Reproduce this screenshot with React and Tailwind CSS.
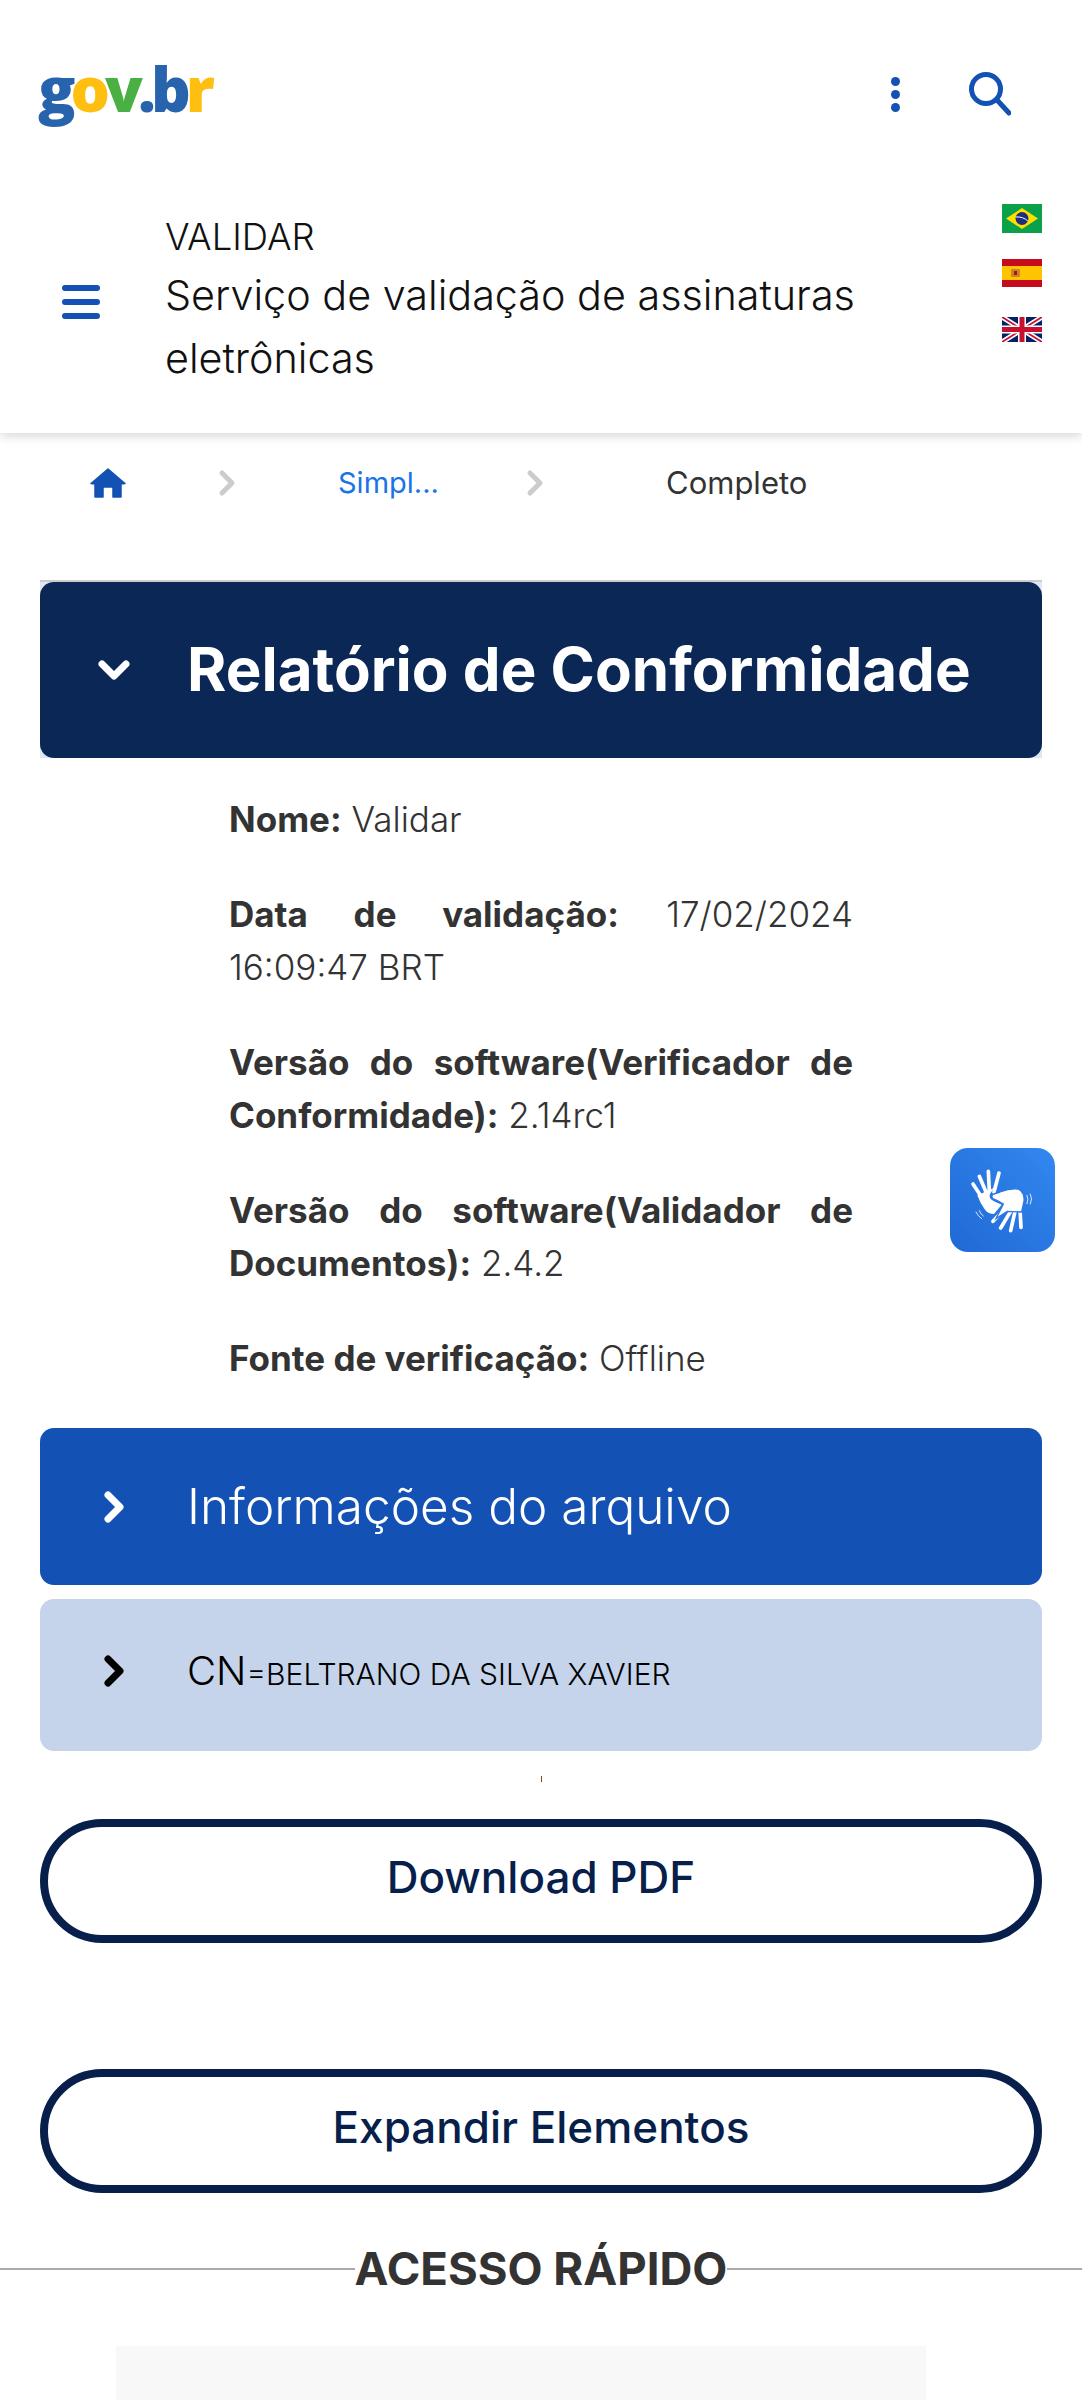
import React from 'react';
import { ChevronRight, ChevronDown } from 'lucide-react';

const FONT = "font-['Inter','Open_Sans',sans-serif]";

const FlagBr = () => (
  <svg viewBox="0 0 40 29" className="w-10 h-[29px] block">
    <rect width="40" height="29" fill="#0aa14a" />
    <path d="M20 4 36 14.500 20 25 4 14.500z" fill="#fedf00" />
    <circle cx="20" cy="14.500" r="6.500" fill="#1c2f7e" />
    <path d="M13.800 13c4.500-.5 9 1 12 4" stroke="#fff" strokeWidth="1" fill="none" />
  </svg>
);

const FlagEs = () => (
  <svg viewBox="0 0 40 28" className="w-10 h-7 block">
    <rect width="40" height="28" fill="#c60b1e" />
    <rect y="7" width="40" height="14" fill="#ffc400" />
    <rect x="9" y="10" width="9" height="8" rx="1" fill="#c8862a" />
    <rect x="12" y="12" width="3" height="4" fill="#ad1519" />
  </svg>
);

const FlagUk = () => (
  <svg viewBox="0 0 40 25" className="w-10 h-[25px] block">
    <rect width="40" height="25" fill="#012169" />
    <path d="M0 0 40 25M40 0 0 25" stroke="#fff" strokeWidth="5" />
    <path d="M0 0 40 25M40 0 0 25" stroke="#c8102e" strokeWidth="1.800" />
    <path d="M20 0v25M0 12.500h40" stroke="#fff" strokeWidth="8" />
    <path d="M20 0v25M0 12.500h40" stroke="#c8102e" strokeWidth="5" />
  </svg>
);

const HouseIcon = () => (
  <svg viewBox="0 0 36 30" className="w-9 h-[30px]" fill="#1351b4" stroke="#1351b4" strokeWidth="1.500" strokeLinejoin="round">
    <path d="M18 1 35 15.500 31 16V29H23V19H13V29H5V16L1 15.500z" />
  </svg>
);

const SearchIcon = () => (
  <svg viewBox="0 0 42 44" className="w-[42px] h-11" fill="none" stroke="#1351b4" strokeWidth="5" strokeLinecap="round">
    <circle cx="17" cy="17" r="14.500" />
    <path d="M28 28 40 41" />
  </svg>
);

const HandsIcon = () => (
  <svg viewBox="150 140 195 195" className="w-[65px] h-[65px]" fill="#fff">
    <g stroke="#fff" strokeWidth="11" strokeLinecap="round">
      <path d="M159 188 185 228M178 165 198 212M205 150 208 208M237 155 222 212" />
      <path d="M219 300 262 255M242 320 275 265M272 328 285 270M303 318 300 265" />
    </g>
    <path d="M172 222 222 200 210 218Q205 232 222 240L245 250 222 278Q205 278 195 265 180 245 172 222Z" />
    <path d="M240 212Q270 200 295 203 315 215 312 240L305 272 262 270 228 292 250 248Q235 238 218 232 212 222 222 218Z" stroke="#2a78e4" strokeWidth="4" />
    <g stroke="#fff" strokeWidth="2.500" fill="none" strokeLinecap="round">
      <path d="M321 222q6 12 0 25M331 218q8 15 0 30" />
      <path d="M178 268q3 10 12 16M168 272q5 12 17 20" />
    </g>
  </svg>
);

const Field = ({ label, children, justify }) => (
  <p className={`text-[35px] font-light leading-[53px] text-[#333] ${justify ? 'text-justify' : ''}`}>
    <b className="font-bold">{label}</b> {children}
  </p>
);

const OutlineButton = ({ children, className = '' }) => (
  <button className={`w-full h-[124px] pb-2 rounded-full border-[8px] border-[#071f4a] text-[#071f4a] text-[44px] font-medium bg-white ${className}`}>
    {children}
  </button>
);

export default function App() {
  return (
    <div className={`relative h-[2400px] overflow-hidden bg-white ${FONT}`}>
      <header className="h-[433px] bg-white shadow-[0_3px_10px_rgba(0,0,0,0.16)] relative z-10 flex flex-col">
        <div className="flex items-center justify-between pl-[38px] pr-[71px] pt-[46px] h-[150px]">
          <span className="font-['Open_Sans',sans-serif] font-extrabold text-[62px] leading-none tracking-[-5px] -mt-[20px]">
            <span className="text-[#2864ae]">g</span>
            <span className="text-[#ffbf10]">o</span>
            <span className="text-[#4bb044]">v</span>
            <span className="text-[#2864ae]">.b</span>
            <span className="text-[#ffbf10]">r</span>
          </span>
          <div className="flex items-center gap-[69px] -mt-2">
            <div className="flex flex-col gap-1">
              <span className="w-[9px] h-[9px] rounded-full bg-[#1351b4]" />
              <span className="w-[9px] h-[9px] rounded-full bg-[#1351b4]" />
              <span className="w-[9px] h-[9px] rounded-full bg-[#1351b4]" />
            </div>
            <SearchIcon />
          </div>
        </div>
        <div className="flex flex-1 pl-[62px] pr-10 pt-[61px]">
          <div className="w-[103px] shrink-0 pt-[74px]">
            <div className="w-[38px] flex flex-col gap-[8px]">
              <span className="h-[6px] rounded-full bg-[#1351b4]" />
              <span className="h-[6px] rounded-full bg-[#1351b4]" />
              <span className="h-[6px] rounded-full bg-[#1351b4]" />
            </div>
          </div>
          <div className="flex-1 text-[#111] font-light">
            <div className="text-[36.500px] leading-[44px] pt-[4px]">VALIDAR</div>
            <div className="text-[41.300px] leading-[63px] mt-[5px] w-[720px]">Serviço de validação de assinaturas eletrônicas</div>
          </div>
          <div className="flex flex-col -mt-[7px]">
            <FlagBr />
            <div className="mt-[26px]"><FlagEs /></div>
            <div className="mt-[30px]"><FlagUk /></div>
          </div>
        </div>
      </header>

      <nav className="h-[99px] flex items-center pl-[90px] text-[30px] font-normal">
        <HouseIcon />
        <ChevronRight size={40} strokeWidth={3} className="text-[#ccc] ml-[81px]" />
        <span className="text-[#1a73e8] text-[29px] ml-[91px] w-[97px]">Simpl...</span>
        <ChevronRight size={40} strokeWidth={3} className="text-[#ccc] ml-[80px]" />
        <span className="text-[#333] text-[31px] ml-[111px] mt-[2px]">Completo</span>
      </nav>

      <main className="px-10 pt-[48px]">
        <div className="bg-[#dfe7f5] border-t-2 border-[#ccc]">
          <section className="h-[176px] rounded-[14px] bg-[#0a2756] flex items-center text-white">
            <ChevronDown size={48} strokeWidth={3.500} className="ml-[50px]" />
            <h1 className="ml-[49px] text-[60px] font-bold -mt-[2px]">Relatório de Conformidade</h1>
          </section>
        </div>

        <div className="w-[624px] ml-[189px] pt-[35px] flex flex-col gap-[42px]">
          <Field label="Nome:">Validar</Field>
          <Field label="Data de validação:" justify>17/02/2024 16:09:47 BRT</Field>
          <Field label="Versão do software(Verificador de Conformidade):" justify>2.14rc1</Field>
          <Field label="Versão do software(Validador de Documentos):" justify>2.4.2</Field>
          <Field label="Fonte de verificação:">Offline</Field>
        </div>

        <section className="mt-[43px] h-[157px] rounded-[14px] bg-[#1351b4] flex items-center text-white">
          <ChevronRight size={48} strokeWidth={3.500} className="ml-[50px]" />
          <h2 className="ml-[49px] text-[49.500px] font-light">Informações do arquivo</h2>
        </section>
        <section className="mt-[14px] h-[152px] rounded-[14px] bg-[#c5d4eb] flex items-center text-black">
          <ChevronRight size={48} strokeWidth={3.500} className="ml-[50px] -mt-2" />
          <h3 className="ml-[49px] -mt-2 font-light">
            <span className="text-[40px]">CN</span>
            <span className="text-[30px]">=BELTRANO DA SILVA XAVIER</span>
          </h3>
        </section>

        <div className="h-[6px] w-px mx-auto bg-[#7a4a20] mt-[25px]" />
        <OutlineButton className="mt-[37px]">Download PDF</OutlineButton>
        <OutlineButton className="mt-[126px]">Expandir Elementos</OutlineButton>
      </main>

      <div className="flex items-center mt-[53px]">
        <span className="flex-1 h-[2px] bg-[#aaa]" />
        <h4 className="text-[45.500px] font-bold text-[#333] leading-none">ACESSO RÁPIDO</h4>
        <span className="flex-1 h-[2px] bg-[#aaa]" />
      </div>
      <div className="ml-[116px] w-[810px] h-[60px] mt-[54px] bg-[#f8f8f8]" />

      <div className="absolute left-[950px] top-[1148px] w-[105px] h-[104px] rounded-[18px] bg-gradient-to-tr from-[#2068d5] to-[#3388f0] flex items-center justify-center">
        <HandsIcon />
      </div>
    </div>
  );
}
